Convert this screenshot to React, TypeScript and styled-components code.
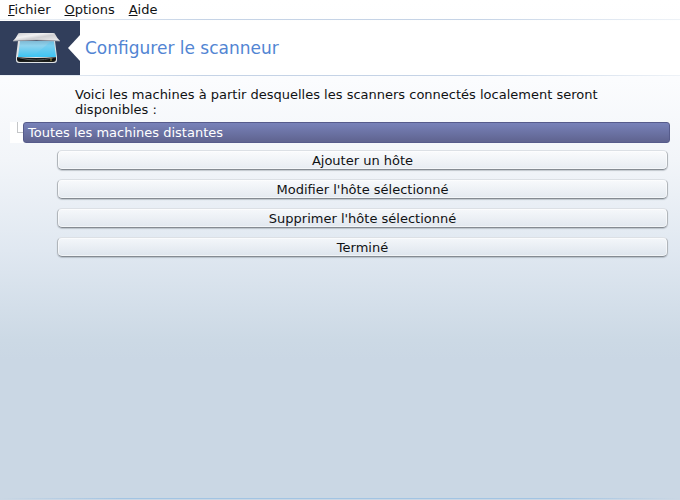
import React from "react";
import styled, { createGlobalStyle } from "styled-components";

const GlobalStyle = createGlobalStyle`
  *, *::before, *::after { box-sizing: border-box; }
  body {
    margin: 0;
    font-family: "DejaVu Sans", sans-serif;
    font-size: 13px;
    line-height: 15px;
    color: #101214;
  }
`;

const Page = styled.div`
  min-height: 100vh;
  display: flex;
  flex-direction: column;
  background: linear-gradient(
    to bottom,
    #ffffff 0,
    #fbfcfe 80px,
    #f2f5f9 160px,
    #e0e8f1 250px,
    #ccd9e5 340px,
    #cad7e4 360px
  );
`;

const MenuBar = styled.nav`
  display: flex;
  gap: 14px;
  height: 19px;
  padding: 2px 8px;
`;

const MenuButton = styled.button`
  padding: 0;
  border: 0;
  background: none;
  font: inherit;
  color: inherit;

  &::first-letter {
    text-decoration: underline;
    text-underline-offset: 1px;
  }
`;

const Separator = styled.div`
  height: 1px;
  background: linear-gradient(to right, #eef2f7, #c5d3e6 30%, #c5d3e6 70%, #eef2f7);
`;

const Banner = styled.header`
  display: flex;
  height: 54px;
  margin-top: 1px;
  background: #ffffff;
`;

const Emblem = styled.div`
  display: flex;
  flex: none;
  align-items: center;
  justify-content: space-between;
  width: 80px;
  padding-left: 12px;
  background: #313e5b;
`;

const Title = styled.h1`
  margin: 0;
  padding-left: 5px;
  align-self: center;
  font-size: 17px;
  font-weight: 400;
  line-height: 20px;
  color: #5285d3;
`;

const Content = styled.main`
  flex: 1;
  padding: 11px 10px 0;
`;

const Intro = styled.p`
  margin: 0 65px 5px;
`;

const Tree = styled.div`
  display: flex;
  height: 21px;
`;

const Branch = styled.div`
  flex: none;
  width: 13px;
  padding-left: 7px;
  background: #ffffff;

  &::before {
    content: "";
    display: block;
    height: 11px;
    border-left: 1px solid #c4c6c8;
    border-bottom: 1px solid #c4c6c8;
  }
`;

const TreeItem = styled.div`
  flex: 1;
  padding: 2px 4px;
  border: 1px solid #565b8b;
  border-radius: 3px;
  background: linear-gradient(#7882b9, #5f638f);
  color: #ffffff;
`;

const Actions = styled.div`
  display: flex;
  flex-direction: column;
  gap: 9px;
  padding: 7px 2px 0 47px;
`;

const ActionButton = styled.button`
  height: 20px;
  padding: 0;
  border: 1px solid;
  border-color: #dce0e5 #b0b5ba #858b92 #b0b5ba;
  border-radius: 5px;
  background: linear-gradient(rgba(255, 255, 255, 0.6), rgba(222, 228, 235, 0.5));
  box-shadow: inset 0 0 0 1px rgba(255, 255, 255, 0.55), 0 1px 1px rgba(90, 100, 110, 0.3);
  font: inherit;
  color: inherit;
`;

const BottomLine = styled.footer`
  height: 1px;
  margin-bottom: 1px;
  background: linear-gradient(to right, #cad7e4, #a2c4e3 18%, #a2c4e3 82%, #cad7e4);
`;

const ScannerIcon = () => (
  <svg width="49" height="34" viewBox="0 0 49 34" aria-hidden="true">
    <defs>
      <linearGradient id="lid" x1="0" y1="0" x2="1" y2="1">
        <stop offset="0" stopColor="#c6c6c9" />
        <stop offset="0.35" stopColor="#f1f1f2" />
        <stop offset="0.55" stopColor="#cfcfd2" />
        <stop offset="1" stopColor="#f0f0f1" />
      </linearGradient>
      <linearGradient id="glass" x1="0" y1="0" x2="0" y2="1">
        <stop offset="0" stopColor="#7fb9d4" />
        <stop offset="0.3" stopColor="#8fd3ee" />
        <stop offset="1" stopColor="#3cc4f3" />
      </linearGradient>
      <linearGradient id="base" x1="0" y1="0" x2="0" y2="1">
        <stop offset="0" stopColor="#4a4d50" />
        <stop offset="0.4" stopColor="#060707" />
        <stop offset="1" stopColor="#22241f" />
      </linearGradient>
    </defs>
    <path d="M6 10H43L45 26V29Q45 32 42 32H7Q4 32 4 29V26Z" fill="#dfe2e4" />
    <path d="M8 10H42L44 26H6Z" fill="url(#glass)" />
    <path d="M24 23L38 11H42L44 26H16Z" fill="#45c8f5" opacity="0.3" />
    <path d="M5 26Q24 28 44 26V28Q44 31 41 31H8Q5 31 5 28Z" fill="url(#base)" />
    <path d="M8 27Q24 31 41 27" stroke="#55595a" fill="none" />
    <path d="M39 27V30" stroke="#a89a4c" />
    <path d="M6 3Q6 2 8 2H41Q43 2 43 3Q45 7 48 10Q24 8 1 10Q4 7 6 3Z" fill="url(#lid)" />
    <path d="M1 10Q24 8 48 10" stroke="#a9acb0" strokeWidth="0.7" fill="none" />
  </svg>
);

const Pointer = () => (
  <svg width="12" height="26" viewBox="0 0 12 26" aria-hidden="true">
    <path d="M12 0V26L0 13Z" fill="#ffffff" />
  </svg>
);

const menus = ["Fichier", "Options", "Aide"];
const actions = [
  "Ajouter un hôte",
  "Modifier l'hôte sélectionné",
  "Supprimer l'hôte sélectionné",
  "Terminé",
];

export default function App() {
  return (
    <Page>
      <GlobalStyle />
      <MenuBar>
        {menus.map((menu) => (
          <MenuButton key={menu} type="button">{menu}</MenuButton>
        ))}
      </MenuBar>
      <Separator />
      <Banner>
        <Emblem>
          <ScannerIcon />
          <Pointer />
        </Emblem>
        <Title>Configurer le scanneur</Title>
      </Banner>
      <Separator />
      <Content>
        <Intro>
          Voici les machines à partir desquelles les scanners connectés localement seront disponibles :
        </Intro>
        <Tree role="tree">
          <Branch />
          <TreeItem role="treeitem" aria-selected="true">Toutes les machines distantes</TreeItem>
        </Tree>
        <Actions>
          {actions.map((action) => (
            <ActionButton key={action} type="button">{action}</ActionButton>
          ))}
        </Actions>
      </Content>
      <BottomLine />
    </Page>
  );
}
